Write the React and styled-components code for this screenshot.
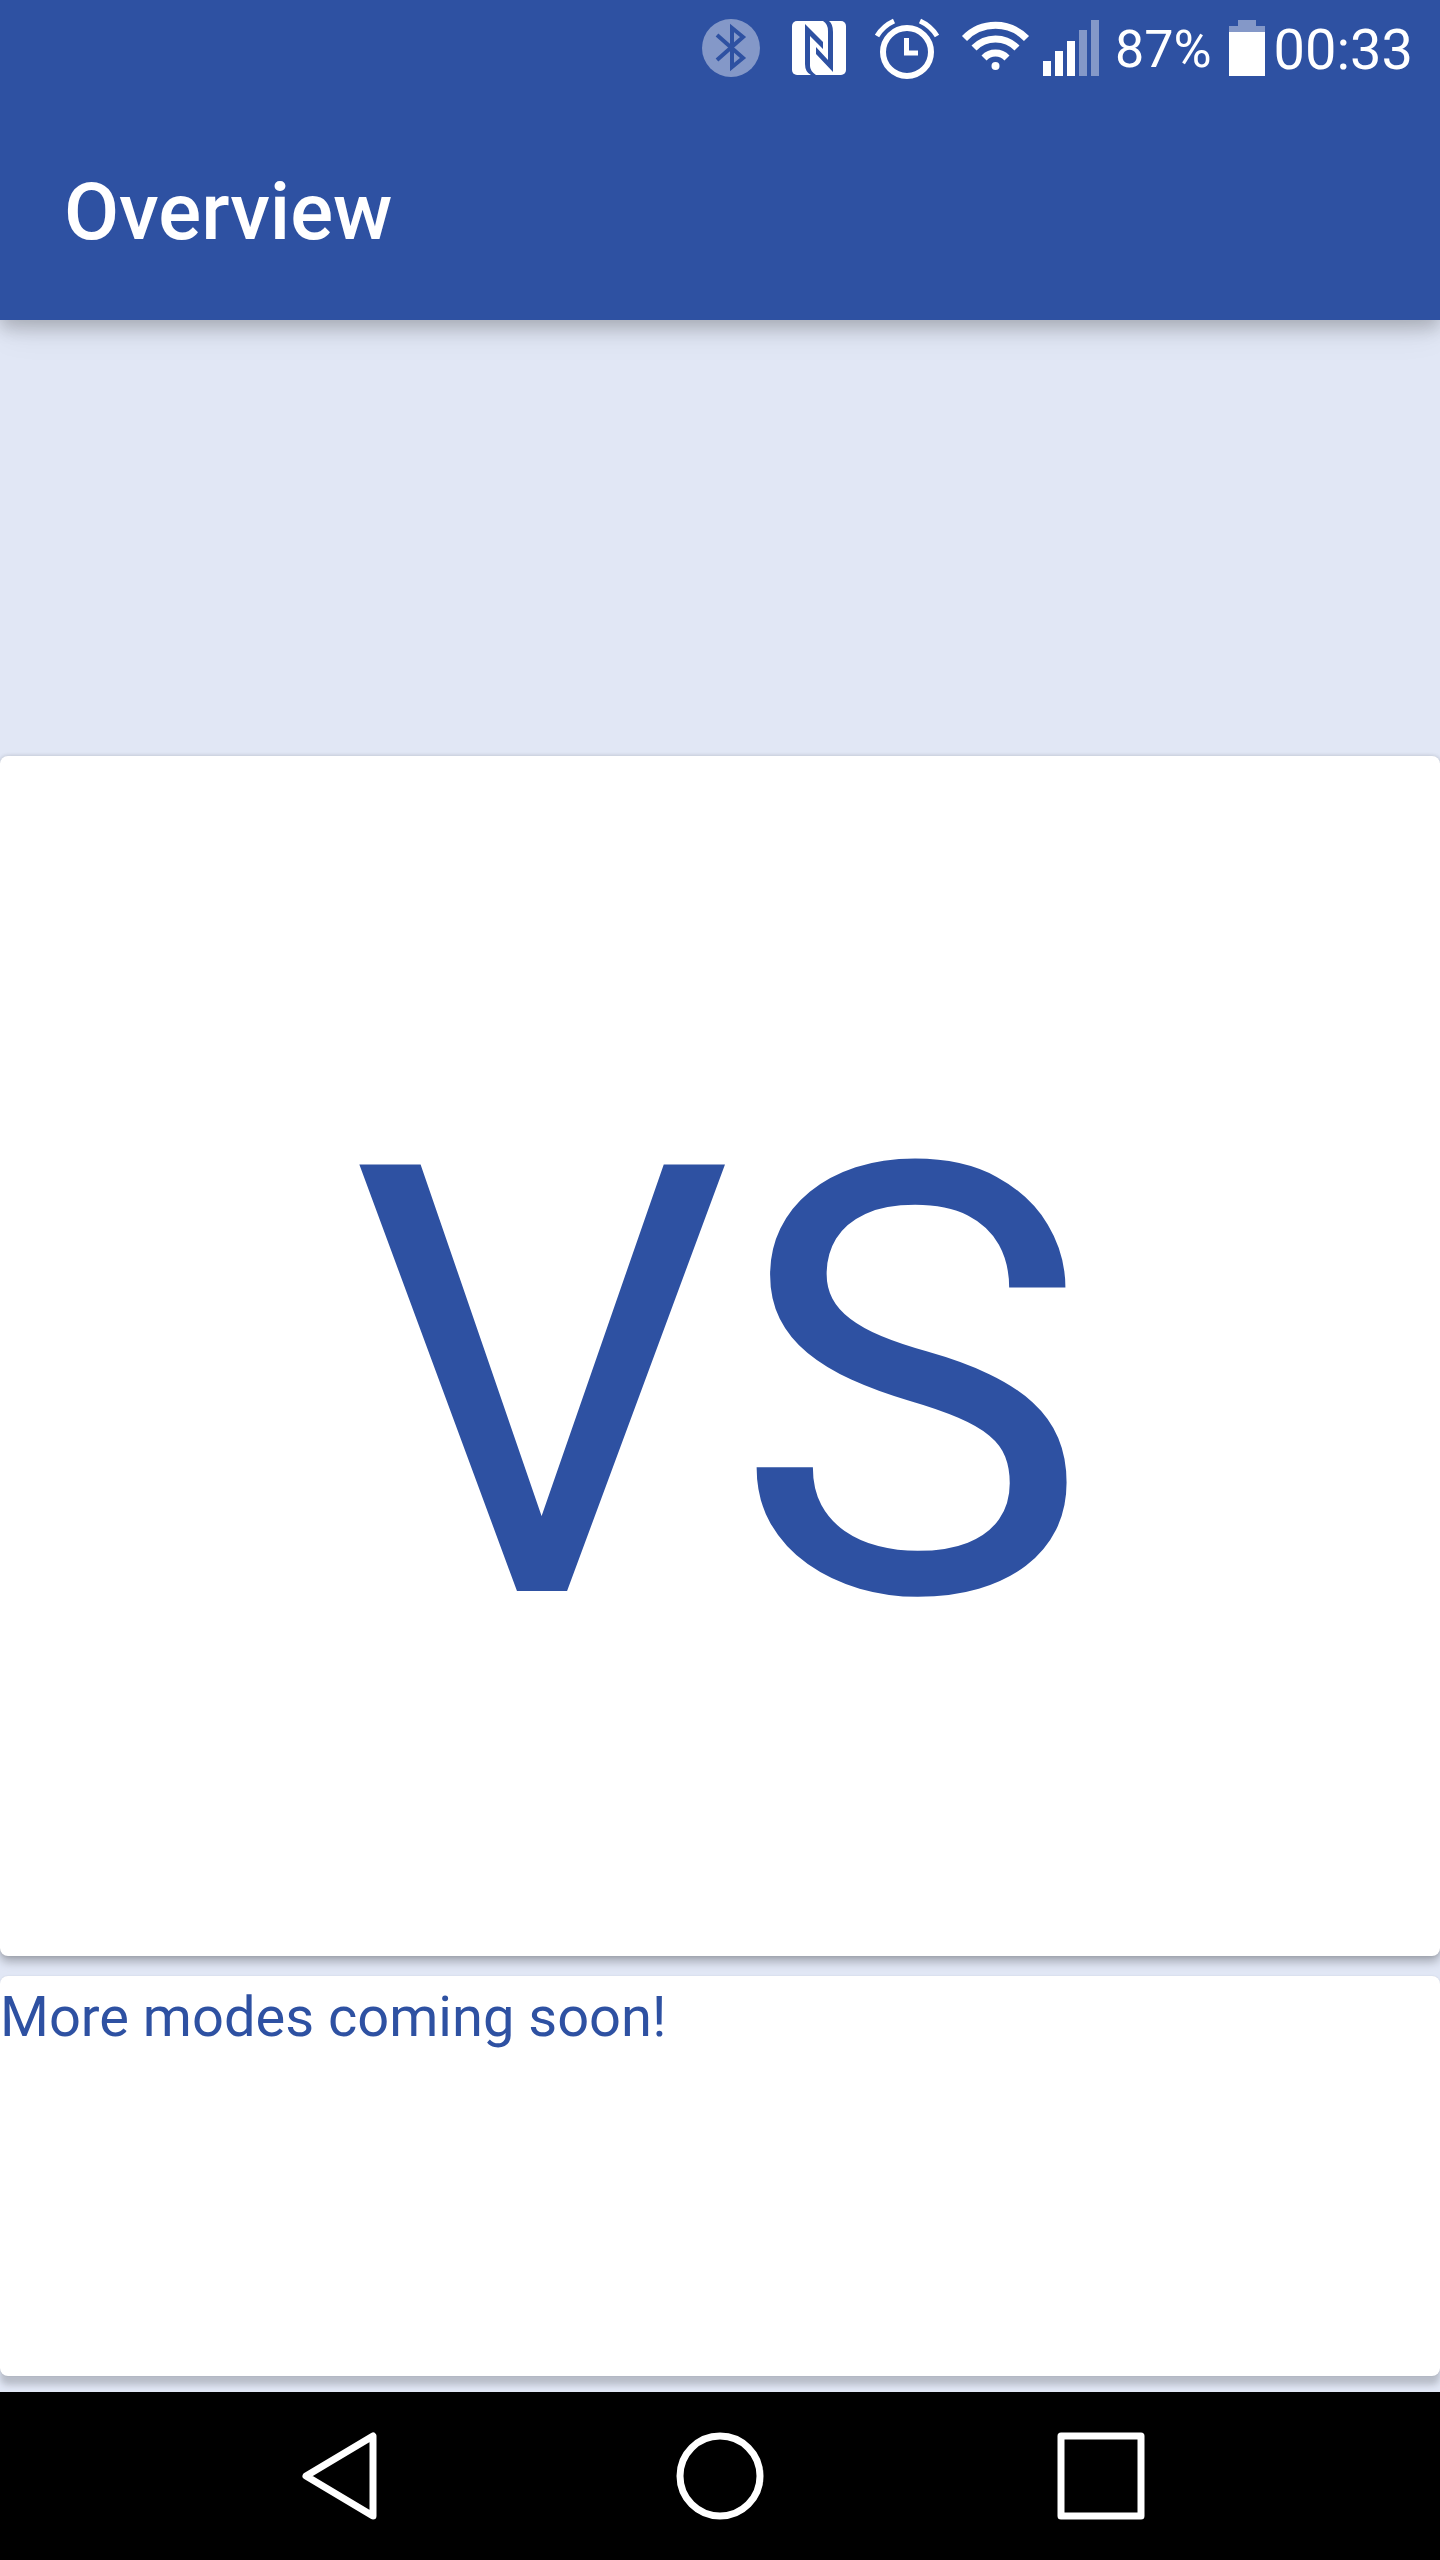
import React from "react";
import styled, { createGlobalStyle } from "styled-components";

const BLUE = "#2e51a2";
const PALE = "#e1e7f5";

const GlobalStyle = createGlobalStyle`
  * { box-sizing: border-box; }
  body {
    margin: 0;
    background: ${PALE};
    font-family: Roboto, "Liberation Sans", sans-serif;
  }
  button { font: inherit; border: 0; padding: 0; margin: 0; cursor: pointer; }
  svg { display: block; }
`;

const Screen = styled.div`
  min-height: 100vh;
  display: flex;
  flex-direction: column;
`;

const Header = styled.header`
  background: ${BLUE};
  color: #fff;
  box-shadow: 0 8px 16px rgba(0, 0, 0, 0.2), 0 16px 32px -4px rgba(0, 0, 0, 0.08);
`;

const StatusBar = styled.div`
  height: 96px;
  display: flex;
  align-items: center;
  justify-content: flex-end;
  gap: 8px;
  padding-right: 27px;
`;

const IconRow = styled.div`
  display: flex;
`;

const StatusText = styled.span`
  font-size: ${(p) => p.$size}px;
  line-height: 96px;
  padding-top: 4px;
`;

const Toolbar = styled.div`
  height: 224px;
  display: flex;
  align-items: center;
  padding: 8px 64px 0;
`;

const Title = styled.h1`
  margin: 0;
  font-size: 80px;
  font-weight: 500;
  line-height: 96px;
`;

const Content = styled.main`
  flex: 1;
  display: flex;
  flex-direction: column;
  justify-content: flex-end;
  gap: 20px;
  padding-bottom: 16px;
  overflow: hidden;
`;

const cardLook = `
  background: #fff;
  color: ${BLUE};
  border-radius: 8px;
`;

const ModeCard = styled.button`
  ${cardLook}
  display: flex;
  align-items: center;
  justify-content: center;
  min-height: 1200px;
  box-shadow: 0 6px 10px rgba(0, 0, 0, 0.26), 0 0 4px rgba(0, 0, 0, 0.14);
`;

const ModeName = styled.span`
  font-size: 600px;
  line-height: 704px;
  padding-top: 60px;
`;

const NoteCard = styled.section`
  ${cardLook}
  min-height: 400px;
  box-shadow: 0 9px 6px rgba(0, 0, 0, 0.18), 0 0 2px rgba(0, 0, 0, 0.1);
`;

const Note = styled.p`
  margin: 0;
  font-size: 56px;
  line-height: 82px;
`;

const NavBar = styled.nav`
  height: 168px;
  background: #000;
  display: flex;
  justify-content: center;
  gap: 212px;
`;

const NavButton = styled.button`
  width: 168px;
  background: transparent;
  display: flex;
  align-items: center;
  justify-content: center;
`;

function Bluetooth() {
  return (
    <svg width="88" height="96" viewBox="0 0 88 96" aria-label="Bluetooth">
      <circle cx="44" cy="48" r="29" fill="#fff" fillOpacity="0.41" />
      <path d="M30 35 L56 58 L45 67 V28 L56 37 L30 60" fill="none" stroke={BLUE} strokeWidth="4" />
    </svg>
  );
}

function Nfc() {
  return (
    <svg width="88" height="96" viewBox="0 0 88 96" aria-label="NFC">
      <rect x="17" y="21" width="54" height="54" rx="5" fill="#fff" />
      <g fill={BLUE}>
        <path d="M30 24 L48 42 V49 L35 36 V66 Q35 71 41 75 H36 Q30 72 30 64 Z" />
        <path d="M58 72 L41 54 V47 L53 60 V31 Q53 24 48 21 H54 Q58 24 58 32 Z" />
      </g>
    </svg>
  );
}

function Alarm() {
  return (
    <svg width="88" height="96" viewBox="0 0 88 96" aria-label="Alarm">
      <g fill="none" stroke="#fff">
        <circle cx="44" cy="52" r="24" strokeWidth="6" />
        <path d="M43.500 38 V53 H55" strokeWidth="5" />
        <path d="M14 36 Q20 26 31 21 M74 36 Q68 26 57 21" strokeWidth="5" />
      </g>
    </svg>
  );
}

function Wifi() {
  return (
    <svg width="88" height="96" viewBox="0 0 88 96" aria-label="Wi-Fi">
      <g fill="none" stroke="#fff" strokeWidth="7">
        <path d="M13.500 38.500 A43 43 0 0 1 75.500 38.500" />
        <path d="M23 48 A30 30 0 0 1 66 48" />
        <path d="M33 58 A16 16 0 0 1 56 58" />
      </g>
      <circle cx="44.500" cy="66" r="4" fill="#fff" />
    </svg>
  );
}

function Signal() {
  return (
    <svg width="68" height="96" viewBox="0 0 68 96" aria-label="Signal">
      <path d="M4 61h8v15h-8z M16 51h8v25h-8z M28 41h8v35h-8z" fill="#fff" />
      <path d="M40 30h8v46h-8z M52 20h8v56h-8z" fill="#fff" fillOpacity="0.41" />
    </svg>
  );
}

function Battery() {
  return (
    <svg width="46" height="96" viewBox="0 0 46 96" aria-label="Battery">
      <path d="M18 20h18v6h9v6h-36v-6h9z" fill="#fff" fillOpacity="0.41" />
      <path d="M9 32h36v44h-36z" fill="#fff" />
    </svg>
  );
}

function NavIcon({ children }) {
  return (
    <svg width="96" height="96" viewBox="0 0 96 96" fill="none" stroke="#fff" strokeWidth="7" strokeLinejoin="round">
      {children}
    </svg>
  );
}

export default function App() {
  return (
    <>
      <GlobalStyle />
      <Screen>
        <Header>
          <StatusBar>
            <IconRow>
              <Bluetooth />
              <Nfc />
              <Alarm />
              <Wifi />
              <Signal />
            </IconRow>
            <StatusText $size={52}>87%</StatusText>
            <Battery />
            <StatusText $size={56}>00:33</StatusText>
          </StatusBar>
          <Toolbar>
            <Title>Overview</Title>
          </Toolbar>
        </Header>
        <Content>
          <ModeCard type="button">
            <ModeName>VS</ModeName>
          </ModeCard>
          <NoteCard>
            <Note>More modes coming soon!</Note>
          </NoteCard>
        </Content>
        <NavBar>
          <NavButton type="button" aria-label="Back">
            <NavIcon><path d="M14 48 L81 8 V88 Z" /></NavIcon>
          </NavButton>
          <NavButton type="button" aria-label="Home">
            <NavIcon><circle cx="48" cy="48" r="40" /></NavIcon>
          </NavButton>
          <NavButton type="button" aria-label="Recent apps">
            <NavIcon><rect x="9" y="8" width="80" height="80" /></NavIcon>
          </NavButton>
        </NavBar>
      </Screen>
    </>
  );
}
